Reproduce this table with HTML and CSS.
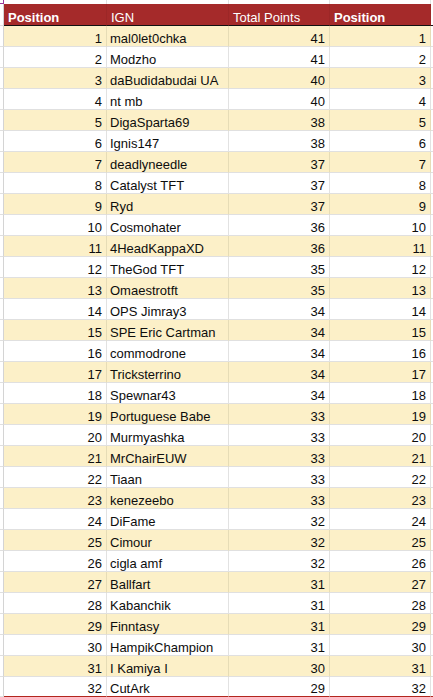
FILE: index.html
```html
<!DOCTYPE html>
<html>
<head>
<meta charset="utf-8">
<link rel="stylesheet" href="styles.css">
</head>
<body>
<div class="sheet">
  <div class="row top">
    <div class="c stub corner"></div><div class="c"></div><div class="c"></div><div class="c"></div><div class="c"></div><div class="c rstub"></div>
  </div>
  <div class="row head">
    <div class="c stub"></div>
    <div class="c h bold">Position</div>
    <div class="c h">IGN</div>
    <div class="c h">Total Points</div>
    <div class="c h bold">Position</div>
    <div class="c rstub"></div>
  </div>
  <div class="row odd"><div class="c stub"></div><div class="c num">1</div><div class="c txt">mal0let0chka</div><div class="c num">41</div><div class="c num">1</div><div class="c rstub"></div></div>
  <div class="row"><div class="c stub"></div><div class="c num">2</div><div class="c txt">Modzho</div><div class="c num">41</div><div class="c num">2</div><div class="c rstub"></div></div>
  <div class="row odd"><div class="c stub"></div><div class="c num">3</div><div class="c txt">daBudidabudai UA</div><div class="c num">40</div><div class="c num">3</div><div class="c rstub"></div></div>
  <div class="row"><div class="c stub"></div><div class="c num">4</div><div class="c txt">nt mb</div><div class="c num">40</div><div class="c num">4</div><div class="c rstub"></div></div>
  <div class="row odd"><div class="c stub"></div><div class="c num">5</div><div class="c txt">DigaSparta69</div><div class="c num">38</div><div class="c num">5</div><div class="c rstub"></div></div>
  <div class="row"><div class="c stub"></div><div class="c num">6</div><div class="c txt">Ignis147</div><div class="c num">38</div><div class="c num">6</div><div class="c rstub"></div></div>
  <div class="row odd"><div class="c stub"></div><div class="c num">7</div><div class="c txt">deadlyneedle</div><div class="c num">37</div><div class="c num">7</div><div class="c rstub"></div></div>
  <div class="row"><div class="c stub"></div><div class="c num">8</div><div class="c txt">Catalyst TFT</div><div class="c num">37</div><div class="c num">8</div><div class="c rstub"></div></div>
  <div class="row odd"><div class="c stub"></div><div class="c num">9</div><div class="c txt">Ryd</div><div class="c num">37</div><div class="c num">9</div><div class="c rstub"></div></div>
  <div class="row"><div class="c stub"></div><div class="c num">10</div><div class="c txt">Cosmohater</div><div class="c num">36</div><div class="c num">10</div><div class="c rstub"></div></div>
  <div class="row odd"><div class="c stub"></div><div class="c num">11</div><div class="c txt">4HeadKappaXD</div><div class="c num">36</div><div class="c num">11</div><div class="c rstub"></div></div>
  <div class="row"><div class="c stub"></div><div class="c num">12</div><div class="c txt">TheGod TFT</div><div class="c num">35</div><div class="c num">12</div><div class="c rstub"></div></div>
  <div class="row odd"><div class="c stub"></div><div class="c num">13</div><div class="c txt">Omaestrotft</div><div class="c num">35</div><div class="c num">13</div><div class="c rstub"></div></div>
  <div class="row"><div class="c stub"></div><div class="c num">14</div><div class="c txt">OPS Jimray3</div><div class="c num">34</div><div class="c num">14</div><div class="c rstub"></div></div>
  <div class="row odd"><div class="c stub"></div><div class="c num">15</div><div class="c txt">SPE Eric Cartman</div><div class="c num">34</div><div class="c num">15</div><div class="c rstub"></div></div>
  <div class="row"><div class="c stub"></div><div class="c num">16</div><div class="c txt">commodrone</div><div class="c num">34</div><div class="c num">16</div><div class="c rstub"></div></div>
  <div class="row odd"><div class="c stub"></div><div class="c num">17</div><div class="c txt">Tricksterrino</div><div class="c num">34</div><div class="c num">17</div><div class="c rstub"></div></div>
  <div class="row"><div class="c stub"></div><div class="c num">18</div><div class="c txt">Spewnar43</div><div class="c num">34</div><div class="c num">18</div><div class="c rstub"></div></div>
  <div class="row odd"><div class="c stub"></div><div class="c num">19</div><div class="c txt">Portuguese Babe</div><div class="c num">33</div><div class="c num">19</div><div class="c rstub"></div></div>
  <div class="row"><div class="c stub"></div><div class="c num">20</div><div class="c txt">Murmyashka</div><div class="c num">33</div><div class="c num">20</div><div class="c rstub"></div></div>
  <div class="row odd"><div class="c stub"></div><div class="c num">21</div><div class="c txt">MrChairEUW</div><div class="c num">33</div><div class="c num">21</div><div class="c rstub"></div></div>
  <div class="row"><div class="c stub"></div><div class="c num">22</div><div class="c txt">Tiaan</div><div class="c num">33</div><div class="c num">22</div><div class="c rstub"></div></div>
  <div class="row odd"><div class="c stub"></div><div class="c num">23</div><div class="c txt">kenezeebo</div><div class="c num">33</div><div class="c num">23</div><div class="c rstub"></div></div>
  <div class="row"><div class="c stub"></div><div class="c num">24</div><div class="c txt">DiFame</div><div class="c num">32</div><div class="c num">24</div><div class="c rstub"></div></div>
  <div class="row odd"><div class="c stub"></div><div class="c num">25</div><div class="c txt">Cimour</div><div class="c num">32</div><div class="c num">25</div><div class="c rstub"></div></div>
  <div class="row"><div class="c stub"></div><div class="c num">26</div><div class="c txt">cigla amf</div><div class="c num">32</div><div class="c num">26</div><div class="c rstub"></div></div>
  <div class="row odd"><div class="c stub"></div><div class="c num">27</div><div class="c txt">Ballfart</div><div class="c num">31</div><div class="c num">27</div><div class="c rstub"></div></div>
  <div class="row"><div class="c stub"></div><div class="c num">28</div><div class="c txt">Kabanchik</div><div class="c num">31</div><div class="c num">28</div><div class="c rstub"></div></div>
  <div class="row odd"><div class="c stub"></div><div class="c num">29</div><div class="c txt">Finntasy</div><div class="c num">31</div><div class="c num">29</div><div class="c rstub"></div></div>
  <div class="row"><div class="c stub"></div><div class="c num">30</div><div class="c txt">HampikChampion</div><div class="c num">31</div><div class="c num">30</div><div class="c rstub"></div></div>
  <div class="row odd"><div class="c stub"></div><div class="c num">31</div><div class="c txt">I Kamiya I</div><div class="c num">30</div><div class="c num">31</div><div class="c rstub"></div></div>
  <div class="row last"><div class="c stub"></div><div class="c num">32</div><div class="c txt">CutArk</div><div class="c num">29</div><div class="c num">32</div><div class="c rstub"></div></div>
</div>
</body>
</html>
```

FILE: styles.css
```css
* { box-sizing: border-box; }
html, body {
  margin: 0;
  padding: 0;
  background: #ffffff;
}
body {
  font-family: "Liberation Sans", Arial, sans-serif;
  font-size: 13px;
  color: #0d0d0d;
  overflow: hidden;
}
.sheet {
  width: 433px;
}
.row {
  display: grid;
  grid-template-columns: 4px 103px 122px 101px 101px 2px;
  height: 21px;
}
.c {
  display: flex;
  align-items: flex-end;
  white-space: nowrap;
  overflow: hidden;
  border-right: 1px solid #e2e2e2;
  border-bottom: 1px solid #e0e0e0;
  line-height: normal;
}
.c.stub {
  border-right-color: #d4d4d4;
}
.c.rstub {
  border-right: none;
}
.row.top {
  height: 4px;
}
.row.top .c {
  border-bottom: none;
}
.row.top .c.corner {
  border-right: 1px solid #9a3a9a;
  border-bottom: 1px solid #9a3a9a;
}
.row.head {
  height: 22px;
}
.row.head .c.stub {
  border-bottom-color: #e0e0e0;
}
.row.head .c.h {
  background: #a52a2a;
  color: #ffffff;
  padding-left: 4px;
  border-right-color: #9c2727;
  border-bottom: 1px solid #111111;
}
.row.head .c.rstub {
  border-bottom: 1px solid #111111;
}
.c.h.bold {
  font-weight: bold;
}
.row.odd .c.num,
.row.odd .c.txt {
  background: #fcf0c8;
  border-right-color: #e6dcb6;
}
.c.num {
  justify-content: flex-end;
  padding-right: 4px;
}
.c.txt {
  padding-left: 3px;
}
.row.last {
  height: 20px;
}
.row.last .c.num,
.row.last .c.txt,
.row.last .c.rstub {
  border-bottom: 1px solid #b3261e;
}
```
